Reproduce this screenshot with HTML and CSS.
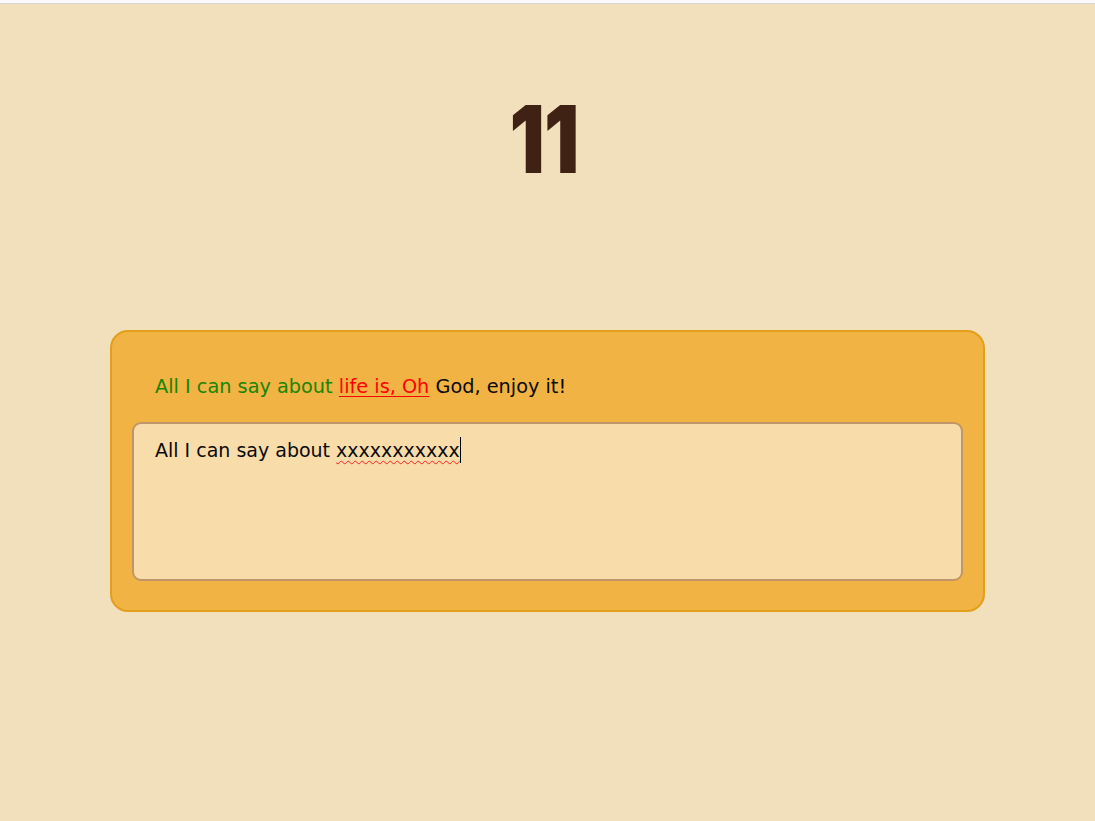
FILE: index.html
```html
<!DOCTYPE html>
<html lang="en">
<head>
<meta charset="utf-8">
<title>Typing</title>
<link rel="stylesheet" href="styles.css">
</head>
<body>
<div class="topbar"></div>
<main class="page">
  <h1 class="counter">11</h1>
  <section class="card">
    <p class="quote"><span class="ok">All I can say about </span><span class="bad">life is, Oh</span> God, enjoy it!</p>
    <div class="input">All I can say about <span class="typo">xxxxxxxxxxx</span><span class="caret"></span></div>
  </section>
</main>
</body>
</html>
```
FILE: styles.css
```css
html, body {
  margin: 0;
  padding: 0;
}
body {
  background: #f2dfbb;
  font-family: "DejaVu Sans", "Open Sans", sans-serif;
  height: 821px;
  overflow: hidden;
}
.topbar {
  height: 3px;
  background: #fafafa;
  border-bottom: 1px solid #d6d6d6;
}
.page {
  display: flex;
  flex-direction: column;
  align-items: center;
}
.counter {
  margin: 67px 6px 0 0;
  height: 259px;
  font-family: "Inter", sans-serif;
  font-weight: 900;
  font-size: 93px;
  line-height: 136px;
  color: #3f2213;
  letter-spacing: -1px;
  transform: scaleX(0.84);
}
.card {
  box-sizing: border-box;
  width: 875px;
  height: 282px;
  background: #f1b343;
  border: 2px solid #e39e1b;
  border-radius: 18px;
  padding: 41px 20px 20px;
}
.quote {
  margin: 0 0 21px;
  padding-left: 23px;
  font-size: 19.3px;
  line-height: 28px;
  color: #0a0a0a;
}
.ok { color: #198500; }
.bad {
  color: #ff0000;
  text-decoration: underline;
  text-underline-offset: 3px;
}
.input {
  box-sizing: border-box;
  height: 159px;
  background: #f8dcaa;
  border: 2px solid #c1956a;
  border-radius: 9px;
  padding: 12px 21px;
  font-size: 19px;
  line-height: 28px;
  color: #0a0a0a;
}
.typo {
  text-decoration: underline wavy #ff2020;
  text-decoration-thickness: 1px;
  text-underline-offset: 3px;
}
.caret {
  display: inline-block;
  width: 1px;
  height: 26px;
  background: #000;
  vertical-align: -6px;
}
```
